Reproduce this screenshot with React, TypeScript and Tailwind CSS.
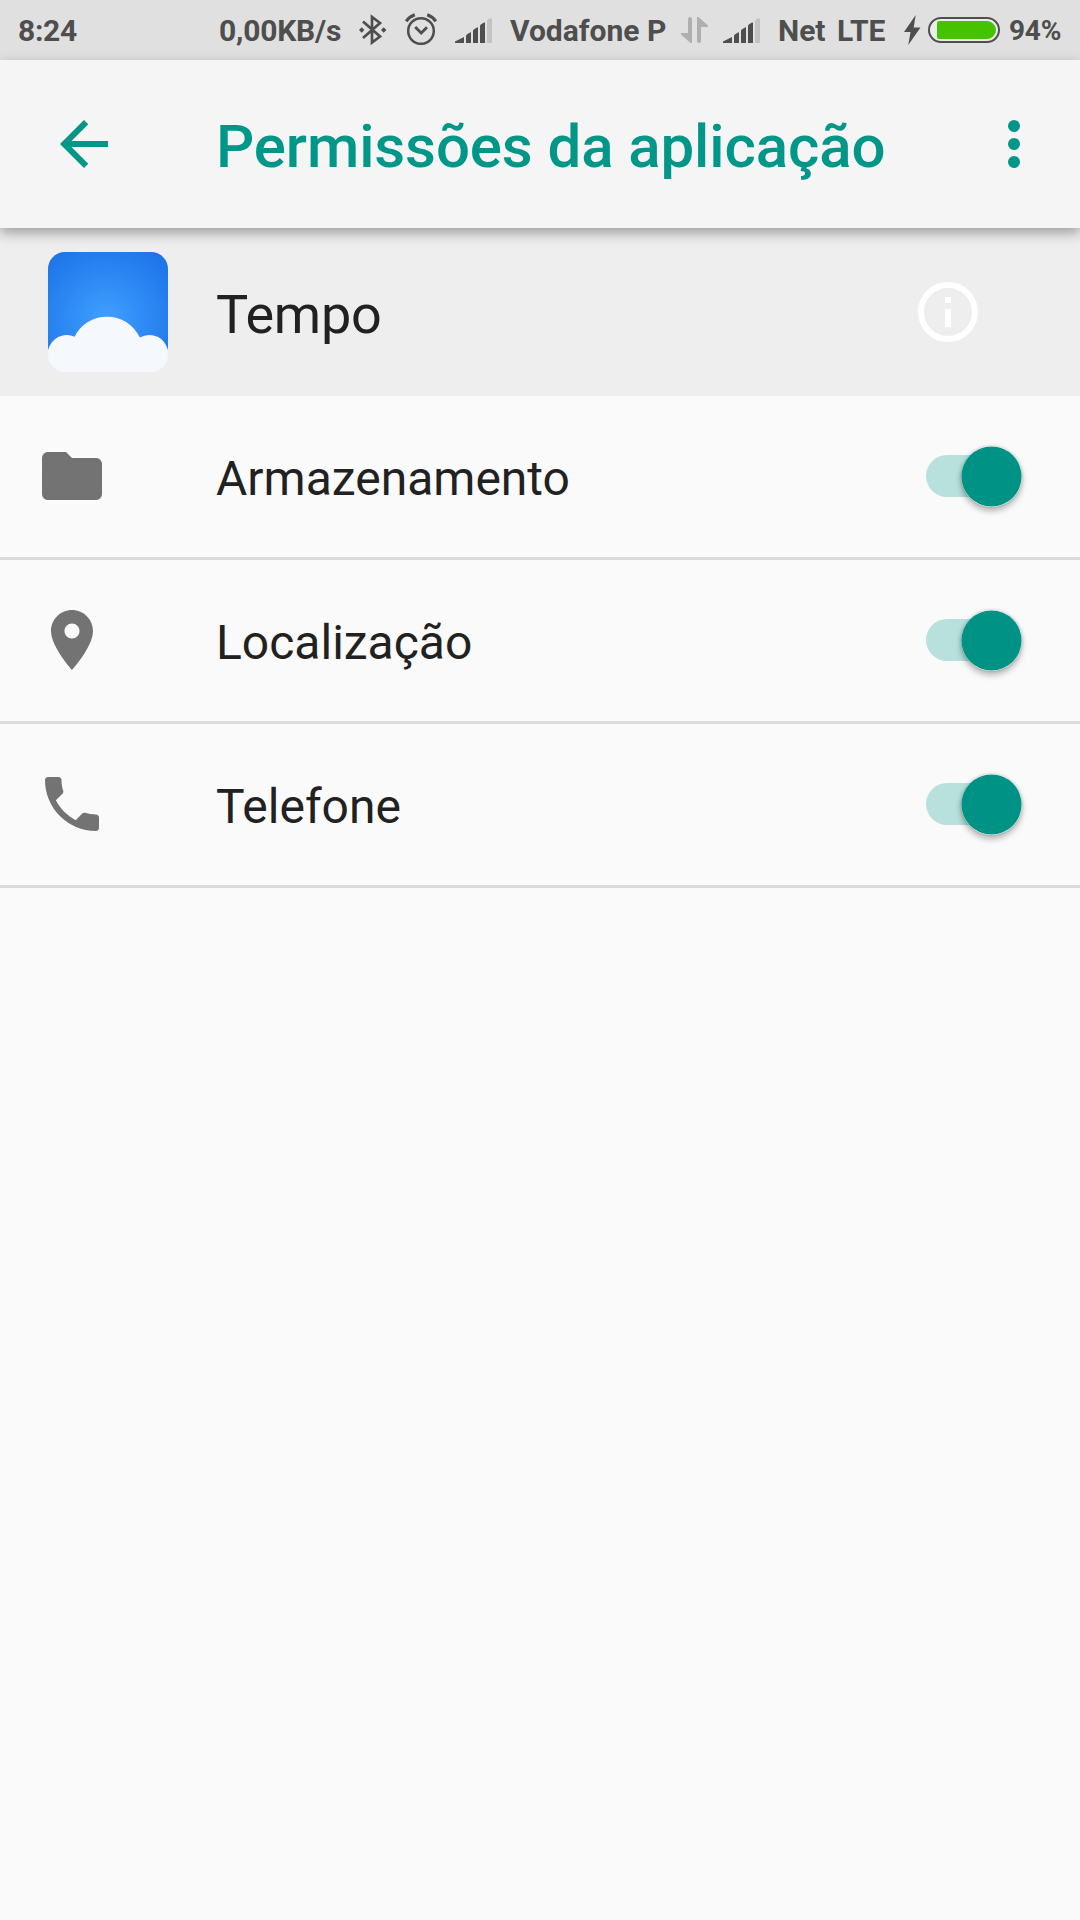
import type { ReactNode } from "react";

function Signal() {
  return (
    <svg className="h-[25px] w-[38px] shrink-0" viewBox="0 0 38 25" fill="#4e4e4e">
      <path d="M0 25V23.4L9 19V25Z" />
      <path d="M11 25V18.3Q11 17 12.2 16.3L15 14.5Q16 14 16 15V25Z" />
      <path d="M18 25V13.3Q18 12 19.2 11.3L22 9.5Q23 9 23 10V25Z" />
      <path d="M25 25V8.3Q25 7 26.2 6.3L29 4.6Q30 4 30 5V25Z" />
      <path d="M32 25V3.3Q32 2 33.2 1.3L36 .2Q37 0 37 1V25Z" fill="#c3c3c3" />
    </svg>
  );
}

function StatusBar() {
  return (
    <div className="flex h-[60px] items-start bg-[#e0e0e0] text-[30px] leading-[62px] font-bold whitespace-nowrap text-[#4e4e4e]">
      <span className="ml-[18px] w-[201px] tracking-[-0.3px]">8:24</span>
      <span className="w-[140px] tracking-[-0.2px]">0,00KB/s</span>
      <svg className="mt-[14px] h-8 w-[29px] shrink-0" viewBox="0 0 29 32" fill="none" stroke="#4e4e4e" strokeWidth="2.7">
        <path d="M4 7.5L21 22.5L13 28.5V3L21 9L4 24" />
        <path d="M2.7 13.3L5.4 16L2.7 18.7L0 16ZM24.7 13.3L27.4 16L24.7 18.7L22 16Z" fill="#4e4e4e" stroke="none" />
      </svg>
      <svg className="mt-[13px] ml-[17px] h-8 w-8 shrink-0" viewBox="0 0 32 32" fill="none" stroke="#4e4e4e" strokeWidth="2.5">
        <circle cx="16" cy="18" r="12.8" />
        <path d="M10.2 14L16.2 20L22 14.2" strokeWidth="2.8" />
        <path d="M1.2 8.4Q4.2 3.8 9.8 1.8M30.8 8.4Q27.8 3.8 22.2 1.8" strokeWidth="3.2" />
      </svg>
      <div className="mt-[18px] ml-[18px]"><Signal /></div>
      <span className="ml-[17px] w-[171px]">Vodafone P</span>
      <svg className="mt-[17px] h-[26px] w-7 shrink-0" viewBox="0 0 28 26" fill="#afafaf">
        <path d="M7 2Q7 0 9 0Q11 0 11 2V26H9.5L0 17.5V16H7ZM16 0H17.5L27 8.5V10H20V24Q20 26 18 26Q16 26 16 24Z" />
      </svg>
      <div className="mt-[18px] ml-[14px]"><Signal /></div>
      <span className="ml-[17px] w-[59px]">Net</span>
      <span className="w-[67px]">LTE</span>
      <svg className="mt-[15px] h-[30px] w-[17px] shrink-0" viewBox="0 0 17 30" fill="#4e4e4e">
        <path d="M11.7 0L0 17H6.5L4.3 30L16.5 12.6H9.7Z" />
      </svg>
      <svg className="mt-[17px] ml-[7px] h-[26px] w-[72px] shrink-0" viewBox="0 0 72 26">
        <rect x="1" y="1" width="70" height="24" rx="12" fill="#ededed" stroke="#4e4e4e" strokeWidth="2" />
        <path d="M11 4H59A9 9 0 0 1 59 22H11Q9 22 9 20V6Q9 4 11 4Z" fill="#46c300" />
      </svg>
      <span className="ml-[9px] text-[28px] tracking-[-0.2px]">94%</span>
    </div>
  );
}

function Row({ label, children }: { label: string; children: ReactNode }) {
  return (
    <div className="flex h-[164px] items-start border-b-[3px] border-[#dcdcdc] pl-9">
      <svg className="mt-[44px] h-[72px] w-[72px] shrink-0" viewBox="0 0 24 24" fill="#737373">{children}</svg>
      <span className="ml-[108px] w-[710px] text-[48px] leading-[166px] text-[#212121]">{label}</span>
      <div className="mt-[59px] flex h-[42px] w-[84px] items-center justify-end rounded-full bg-[#b8e0dc]">
        <div className="mt-px -mr-3 h-[61px] w-[61px] shrink-0 rounded-full shadow-[0_4px_6px_rgba(0,0,0,0.28),0_0_3px_rgba(0,0,0,0.2)]">
          <svg className="block h-[61px] w-[61px]" viewBox="0 0 61 61">
            <circle cx="30.5" cy="30.5" r="30.1" fill="#009385" />
          </svg>
        </div>
      </div>
    </div>
  );
}

export default function App() {
  return (
    <div className="h-[1920px] w-[1080px] overflow-hidden bg-[#fafafa] font-['Roboto',sans-serif]">
      <StatusBar />
      <header className="relative flex h-[168px] items-center bg-[#f5f5f5] pl-12 shadow-[0_5px_12px_rgba(0,0,0,0.34)]">
        <svg className="h-[72px] w-[72px]" viewBox="0 0 24 24" fill="#009688">
          <path d="M20 11H7.83l5.59-5.59L12 4l-8 8 8 8 1.41-1.41L7.83 13H20v-2z" />
        </svg>
        <h1 className="ml-24 w-[762px] pt-1.5 text-[60px] leading-[72px] font-medium tracking-[-0.1px] whitespace-nowrap text-[#009688]">Permissões da aplicação</h1>
        <svg className="h-[72px] w-[72px]" viewBox="0 0 24 24" fill="#009688">
          <circle cx="12" cy="6" r="2" /><circle cx="12" cy="12" r="2" /><circle cx="12" cy="18" r="2" />
        </svg>
      </header>
      <section className="flex h-[168px] items-center bg-[#eeeeee] pl-12">
        <svg className="h-[120px] w-[120px] rounded-[17px]" viewBox="0 0 120 120">
          <defs>
            <radialGradient id="sky" gradientUnits="userSpaceOnUse" cx="58" cy="67" r="90">
              <stop offset="0" stopColor="#40a0ff" />
              <stop offset=".5" stopColor="#2c87f3" />
              <stop offset="1" stopColor="#1b70e5" />
            </radialGradient>
          </defs>
          <rect width="120" height="99" fill="url(#sky)" />
          <path d="M0 98C3 88 11 83 19 83Q23 83 26.5 84.8C33 72 45 64.8 59 64.8C73 64.8 85 72 92 85.5Q96 83 101 83C110 83 117 88 120 98V120H0Z" fill="#f5f8fd" />
        </svg>
        <span className="ml-12 w-[696px] pt-1.5 text-[54px] leading-[64px] tracking-[-0.2px] text-[#212121]">Tempo</span>
        <svg className="h-[72px] w-[72px]" viewBox="0 0 24 24" fill="#fff">
          <path d="M11 17h2v-6h-2v6zm1-15C6.48 2 2 6.48 2 12s4.48 10 10 10 10-4.48 10-10S17.52 2 12 2zm0 18c-4.41 0-8-3.59-8-8s3.59-8 8-8 8 3.59 8 8-3.59 8-8 8zM11 9h2V7h-2v2z" />
        </svg>
      </section>
      <Row label="Armazenamento">
        <path d="M10 4H4c-1.1 0-1.99.9-1.99 2L2 18c0 1.1.9 2 2 2h16c1.1 0 2-.9 2-2V8c0-1.1-.9-2-2-2h-8l-2-2z" />
      </Row>
      <Row label="Localização">
        <path d="M12 2C8.13 2 5 5.13 5 9c0 5.25 7 13 7 13s7-7.75 7-13c0-3.87-3.13-7-7-7zm0 9.5c-1.38 0-2.5-1.12-2.5-2.5s1.12-2.5 2.5-2.5 2.5 1.12 2.5 2.5-1.12 2.5-2.5 2.5z" />
      </Row>
      <Row label="Telefone">
        <path d="M6.62 10.79c1.44 2.83 3.76 5.14 6.59 6.59l2.2-2.2c.27-.27.67-.36 1.02-.24 1.12.37 2.33.57 3.57.57.55 0 1 .45 1 1V20c0 .55-.45 1-1 1-9.39 0-17-7.61-17-17 0-.55.45-1 1-1h3.5c.55 0 1 .45 1 1 0 1.25.2 2.45.57 3.57.11.35.03.74-.25 1.02l-2.2 2.2z" />
      </Row>
    </div>
  );
}
